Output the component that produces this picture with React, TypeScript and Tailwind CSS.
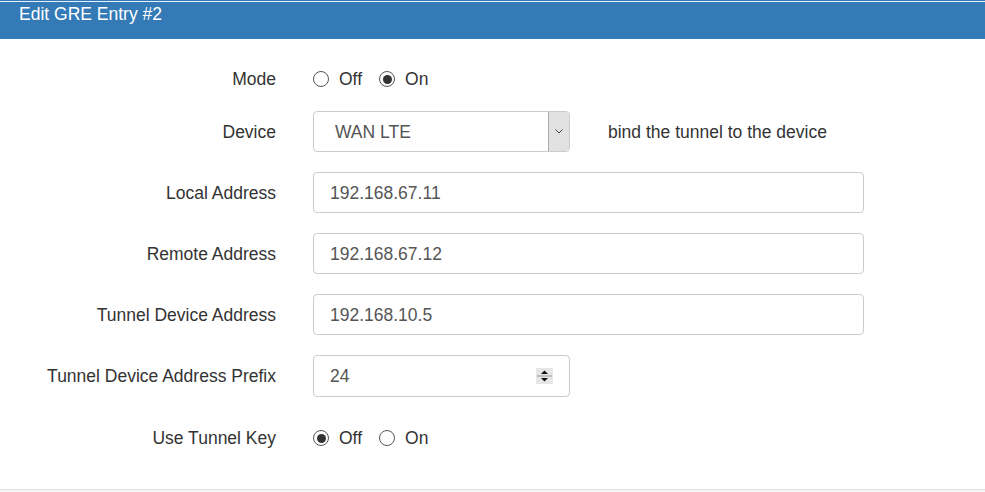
import React from "react";

function Radio({ checked, label }: { checked: boolean; label: string }) {
  return (
    <span className="flex items-center">
      <span className="w-[16px] h-[16px] rounded-full border border-[#555] bg-white flex items-center justify-center">
        {checked && <span className="w-[9px] h-[9px] rounded-full bg-[#333]" />}
      </span>
      <span className="ml-[10px]">{label}</span>
    </span>
  );
}

function Row({ label, children, className }: { label: string; children: React.ReactNode; className: string }) {
  return (
    <div className={"flex items-center " + className}>
      <div className="w-[276px] text-right shrink-0 text-[#333]">{label}</div>
      <div className="ml-[37px] flex items-center">{children}</div>
    </div>
  );
}

function TextInput({ value, w }: { value: string; w: string }) {
  return (
    <div className={"h-[41px] border border-[#ccc] rounded-[4px] flex items-center pl-[16px] text-[#555] bg-white " + w}>
      {value}
    </div>
  );
}

export default function App() {
  return (
    <div className="w-[985px] h-[492px] bg-white overflow-hidden flex flex-col text-[17.5px] leading-[20px]" style={{ fontFamily: '"Liberation Sans", Arial, sans-serif' }}>
      <div className="h-[39px] bg-[#337ab7] flex flex-col shrink-0">
        <div className="h-px bg-[#337ab7]" />
        <div className="h-px bg-[#e8f0f8]" />
        <div className="pl-[19px] pt-[3px] text-white leading-[18px]">Edit GRE Entry #2</div>
      </div>

      <Row label="Mode" className="mt-[30px] h-[20px]">
        <div className="flex items-center text-[#333]">
          <Radio checked={false} label="Off" />
          <span className="ml-[17px]" />
          <Radio checked={true} label="On" />
        </div>
      </Row>

      <Row label="Device" className="mt-[22px] h-[41px]">
        <div className="w-[257px] h-[41px] border border-[#ccc] rounded-[4px] flex bg-white overflow-hidden">
          <div className="flex-1 flex items-center pl-[21px] text-[#555]">WAN LTE</div>
          <div className="w-[21px] bg-[#e1e1e1] border-l border-[#adadad] flex items-center justify-center">
            <svg width="8" height="5" viewBox="0 0 8 5">
              <path d="M0.5 0.5 L4 4 L7.5 0.5" fill="none" stroke="#444" strokeWidth="1" />
            </svg>
          </div>
        </div>
        <span className="ml-[38px] text-[#333]">bind the tunnel to the device</span>
      </Row>

      <Row label="Local Address" className="mt-[20px] h-[41px]">
        <TextInput value="192.168.67.11" w="w-[551px]" />
      </Row>
      <Row label="Remote Address" className="mt-[20px] h-[41px]">
        <TextInput value="192.168.67.12" w="w-[551px]" />
      </Row>
      <Row label="Tunnel Device Address" className="mt-[20px] h-[41px]">
        <TextInput value="192.168.10.5" w="w-[551px]" />
      </Row>
      <Row label="Tunnel Device Address Prefix" className="mt-[20px] h-[42px]">
        <div className="w-[257px] h-[42px] border border-[#ccc] rounded-[4px] flex items-center pl-[16px] pr-[16px] text-[#555] bg-white">
          <span className="flex-1">24</span>
          <svg width="17" height="16" viewBox="0 0 17 16">
            <rect x="0" y="0" width="17" height="16" fill="#e6e6e6" />
            <line x1="1" y1="8" x2="16" y2="8" stroke="#9a9a9a" strokeWidth="1" />
            <path d="M5 6 L8.5 2.5 L12 6 Z" fill="#111" />
            <path d="M5 10 L8.5 13.5 L12 10 Z" fill="#111" />
          </svg>
        </div>
      </Row>

      <Row label="Use Tunnel Key" className="mt-[31px] h-[20px]">
        <div className="flex items-center text-[#333]">
          <Radio checked={true} label="Off" />
          <span className="ml-[17px]" />
          <Radio checked={false} label="On" />
        </div>
      </Row>

      <div className="mt-[41px] flex-1 border-t border-[#e5e5e5] bg-[#f5f5f5]" />
    </div>
  );
}
